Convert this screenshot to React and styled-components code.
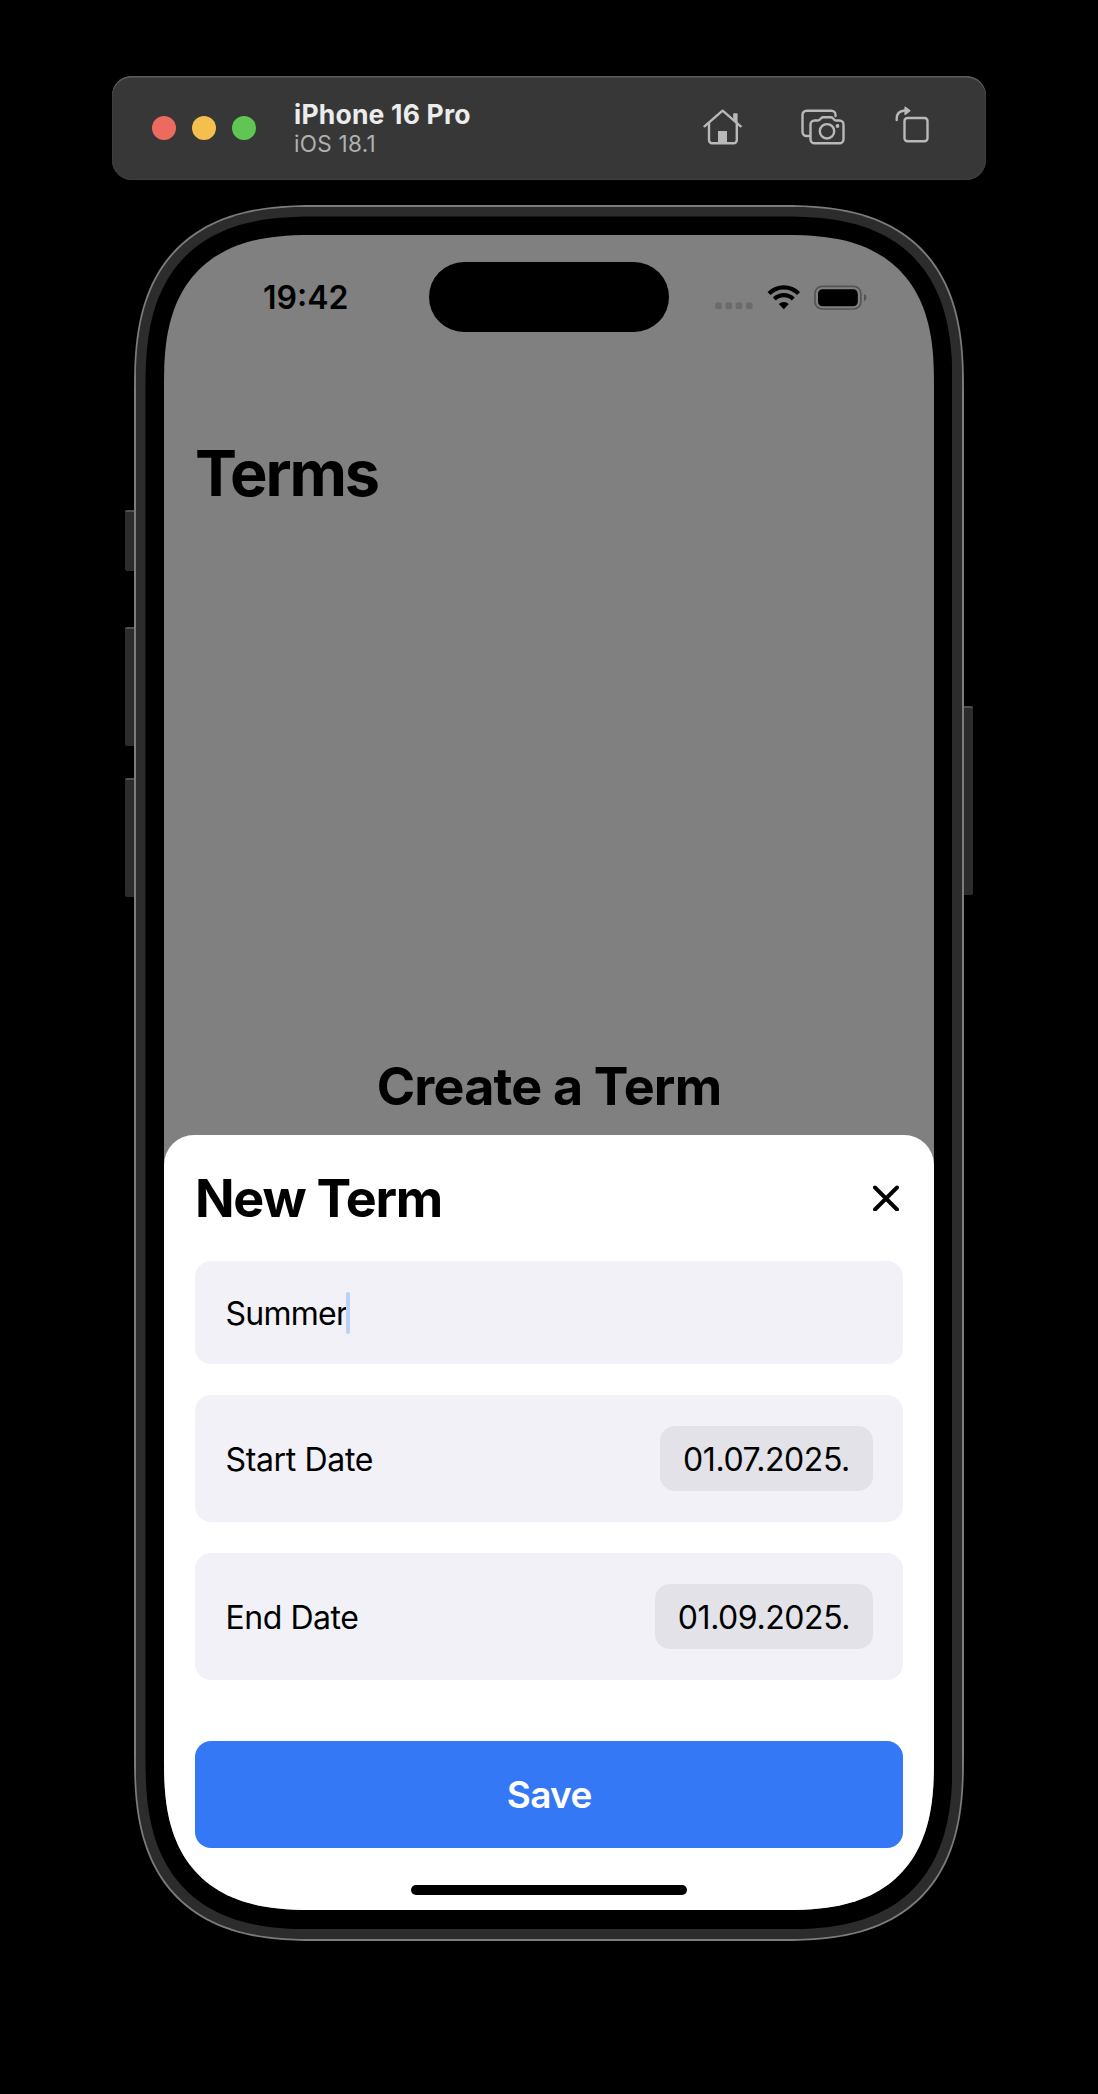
import React from "react";
import styled, { createGlobalStyle } from "styled-components";

const GlobalStyle = createGlobalStyle`
  * { box-sizing: border-box; }
  body { margin: 0; background: #000; }
`;

/* Outline of a rectangle with superellipse corners that ease into the edges. */
const smoothRect = (w, h, r) => {
  const steps = 40;
  const power = 2 / 2.68;
  const corner = Array.from({ length: steps + 1 }, (_, i) => {
    const t = (i / steps) * (Math.PI / 2);
    return [
      r * (1 - Math.abs(Math.sin(Math.PI / 2 - t)) ** power),
      r * (1 - Math.abs(Math.sin(t)) ** power),
    ];
  });
  const back = [...corner].reverse();
  const points = [
    ...back.map(([x, y]) => [w - x, y]),
    ...corner.map(([x, y]) => [w - x, h - y]),
    ...back.map(([x, y]) => [x, h - y]),
    ...corner.map(([x, y]) => [x, y]),
  ];
  return "M" + points.map(([x, y]) => `${x.toFixed(2)} ${y.toFixed(2)}`).join("L") + "Z";
};

const Page = styled.main`
  width: 1098px;
  height: 2094px;
  padding-top: 76px;
  background: #000;
  display: flex;
  flex-direction: column;
  align-items: center;
  gap: 25px;
  font-family: Inter, "Liberation Sans", sans-serif;
  color: #000;
`;

const Toolbar = styled.header`
  width: 874px;
  height: 104px;
  padding: 0 57px 0 40px;
  border-radius: 20px;
  background: #373737;
  box-shadow: inset 0 1.5px 0 #5c5c5c, inset 0 0 0 1px #3e3e3e;
  display: flex;
  align-items: center;
`;

const Lights = styled.div`
  display: flex;
  gap: 16px;
`;

const Light = styled.span`
  width: 24px;
  height: 24px;
  border-radius: 50%;
  background: ${(p) => p.$color};
`;

const Device = styled.div`
  margin-left: 38px;
  padding-bottom: 1px;
  flex: 1;
`;

const DeviceName = styled.div`
  font-size: 26.5px;
  line-height: 32px;
  font-weight: 700;
  letter-spacing: 0.2px;
  color: #ececec;
`;

const DeviceOs = styled.div`
  font-size: 22.5px;
  line-height: 28px;
  letter-spacing: 0.3px;
  color: #b0b0b0;
`;

const Tools = styled.div`
  padding-bottom: 7px;
  display: flex;
  align-items: flex-end;
`;

const Tool = styled.span`
  display: flex;
  margin-left: ${(p) => p.$gap}px;
`;

const Phone = styled.div`
  display: grid;
  grid-template-columns: 9.5px 830px 9.5px;
`;

const Keys = styled.div`
  padding-top: ${(p) => p.$top}px;
  padding-right: ${(p) => (p.$right ? 1 : 0)}px;
  display: flex;
  flex-direction: column;
`;

const Key = styled.span`
  height: ${(p) => p.$height}px;
  margin-bottom: ${(p) => p.$after || 0}px;
  background: #2c2c2c;
  border-top: 2px solid #505050;
  border-radius: ${(p) => (p.$right ? "0 2px 2px 0" : "2px 0 0 2px")};
`;

const Layer = styled.div`
  width: ${(p) => p.$w}px;
  height: ${(p) => p.$h}px;
  padding: ${(p) => p.$inset}px;
  background: ${(p) => p.$color};
  clip-path: path("${(p) => smoothRect(p.$w, p.$h, p.$r)}");
`;

const Screen = styled.div`
  width: 770px;
  height: 1675px;
  background: #808080;
  clip-path: path("${smoothRect(770, 1675, 153)}");
  display: flex;
  flex-direction: column;
`;

const StatusBar = styled.div`
  height: 124px;
  flex: none;
  padding-top: 27px;
  display: grid;
  grid-template-columns: 265px 240px 1fr;
`;

const Clock = styled.div`
  padding-left: 99px;
  font-size: 32px;
  line-height: 72px;
  font-weight: 600;
`;

const Island = styled.div`
  height: 70px;
  border-radius: 36px;
  background: #000;
`;

const Indicators = styled.div`
  height: 71px;
  padding-left: 46px;
`;

const PageTitle = styled.h1`
  margin: 74px 0 0 31px;
  font-size: 63px;
  line-height: 80px;
  font-weight: 700;
  letter-spacing: -2.1px;
`;

const EmptyTitle = styled.h2`
  margin: auto 0 16px;
  text-align: center;
  font-size: 52px;
  line-height: 64px;
  font-weight: 700;
  letter-spacing: -0.8px;
`;

const Sheet = styled.section`
  height: 775px;
  flex: none;
  padding: 31px 30.5px 0 31px;
  border-radius: 30px 30px 0 0;
  background: #fff;
  display: flex;
  flex-direction: column;
`;

const SheetHead = styled.div`
  height: 64px;
  margin-bottom: 31px;
  padding-right: 4px;
  display: flex;
  align-items: center;
  justify-content: space-between;
`;

const SheetTitle = styled.h2`
  margin: 2px 0 0;
  font-size: 52px;
  line-height: 64px;
  font-weight: 700;
  letter-spacing: -1.25px;
`;

const Field = styled.div`
  height: ${(p) => p.$height}px;
  margin-bottom: 31px;
  padding: 0 30.5px;
  border-radius: 16px;
  background: #f2f1f7;
  display: flex;
  align-items: center;
  font-size: 32px;
  line-height: 40px;
`;

const FieldText = styled.span`
  padding-top: 3px;
  flex: ${(p) => (p.$grow ? 1 : "none")};
  letter-spacing: ${(p) => p.$track}px;
`;

const Caret = styled.span`
  width: 4px;
  height: 42px;
  margin: 1px 0 0 -1px;
  border-radius: 2px;
  background: #bbd1f5;
`;

const DatePill = styled.span`
  width: ${(p) => p.$width}px;
  height: 65px;
  padding-top: 3px;
  border-radius: 15px;
  background: #e3e2e8;
  display: flex;
  align-items: center;
  justify-content: center;
  letter-spacing: -0.43px;
`;

const SaveButton = styled.button`
  height: 107px;
  margin-top: 30.5px;
  padding: 0;
  border: 0;
  border-radius: 16px;
  background: #3478f6;
  color: #fff;
  font: 600 37px/106px Inter, "Liberation Sans", sans-serif;
  letter-spacing: -0.7px;
`;

const HomeBar = styled.div`
  width: 276px;
  height: 9.5px;
  margin: 37px auto 0;
  border-radius: 5px;
  background: #000;
`;

const HomeIcon = () => (
  <svg width="40" height="36" viewBox="0 0 40 36" fill="none" stroke="#b9b9b9" strokeWidth="2.4" strokeLinecap="round" strokeLinejoin="round">
    <path d="M1.5 17.3 19.6 1.7 37.7 17.3" />
    <path d="M6 14.5V31.3a3 3 0 0 0 3 3H30.8a3 3 0 0 0 3-3V14.5" />
    <path d="M31 11V5h2.8V13.5" fill="#b9b9b9" strokeWidth="1.6" />
    <path d="M15 22h9v12h-9z" fill="#b9b9b9" stroke="none" />
  </svg>
);

const CameraIcon = () => (
  <svg width="44" height="36" viewBox="0 0 44 36" fill="none" stroke="#b9b9b9" strokeWidth="2.4" strokeLinecap="round" strokeLinejoin="round">
    <path d="M8 27H5.5a4 4 0 0 1-4-4V5.7a4 4 0 0 1 4-4H30.5a4 4 0 0 1 4 4V7" />
    <path d="M13.5 11.5h3.2c1 0 1.6-.3 2.2-1l1.2-1.3c.6-.7 1.3-1 2.2-1h7.4c.9 0 1.6.3 2.2 1l1.2 1.3c.6.7 1.2 1 2.2 1h3.2a4 4 0 0 1 4 4V30.3a4 4 0 0 1-4 4H13.5a4 4 0 0 1-4-4V15.5a4 4 0 0 1 4-4z" />
    <circle cx="26" cy="22.3" r="7.2" />
    <circle cx="36.5" cy="17" r="1.9" fill="#b9b9b9" stroke="none" />
  </svg>
);

const RotateIcon = () => (
  <svg width="34" height="40" viewBox="0 0 34 40" fill="none" stroke="#b9b9b9" strokeWidth="2.4" strokeLinecap="round" strokeLinejoin="round">
    <rect x="9.5" y="13" width="23" height="23.3" rx="3" />
    <path d="M1.7 15V13.5C1.7 8.5 4.5 6 9.5 5.5" />
    <path d="M10 2 15 5.7 10 9.5z" fill="#b9b9b9" strokeWidth="1.2" />
  </svg>
);

const StatusIcons = () => (
  <svg width="152" height="71" viewBox="0 0 152 71">
    <g fill="#6b6b6b">
      {[0, 10.3, 20.5, 30.8].map((x) => (
        <rect key={x} x={0.2 + x} y="40.6" width="6.6" height="6.6" rx="1.8" />
      ))}
    </g>
    <g fill="none" stroke="#000" strokeWidth="4.2">
      <path d="M54 31.5A20.8 20.8 0 0 1 83.6 31.5" />
      <path d="M59.3 37.1A13.5 13.5 0 0 1 78.3 37.1" />
    </g>
    <path d="M63.8 41.9A7.5 7.5 0 0 1 73.8 41.9L68.8 47.2z" />
    <rect x="100" y="24.3" width="45.800" height="22.700" rx="7" fill="none" stroke="#545454" strokeWidth="1.700" />
    <rect x="103" y="27.200" width="39.800" height="17" rx="4.500" />
    <path d="M149 32c3.200 1.200 3.200 6 0 7.200z" fill="#545454" />
  </svg>
);

const CloseIcon = () => (
  <svg width="26" height="26" viewBox="0 0 26 26" stroke="#000" strokeWidth="3.9" strokeLinecap="round">
    <path d="M2 2.5 24 24.500M24 2.500 2 24.500" />
  </svg>
);

export default function App() {
  return (
    <Page>
      <GlobalStyle />
      <Toolbar>
        <Lights>
          <Light $color="#ed6a5e" />
          <Light $color="#f5bf4f" />
          <Light $color="#61c554" />
        </Lights>
        <Device>
          <DeviceName>iPhone 16 Pro</DeviceName>
          <DeviceOs>iOS 18.1</DeviceOs>
        </Device>
        <Tools>
          <Tool $gap={0}><HomeIcon /></Tool>
          <Tool $gap={57.5}><CameraIcon /></Tool>
          <Tool $gap={50.5}><RotateIcon /></Tool>
        </Tools>
      </Toolbar>
      <Phone>
        <Keys $top={305}>
          <Key $height={61} $after={56} />
          <Key $height={119} $after={32} />
          <Key $height={119} />
        </Keys>
        <Layer $w={830} $h={1736} $r={188} $inset={1.7} $color="#7c7c7c">
          <Layer $w={826.6} $h={1732.6} $r={186.3} $inset={9.8} $color="#2c2c2c">
            <Layer $w={807} $h={1713} $r={175} $inset={18.5} $color="#000">
              <Screen>
                <StatusBar>
                  <Clock>19:42</Clock>
                  <Island />
                  <Indicators>
                    <StatusIcons />
                  </Indicators>
                </StatusBar>
                <PageTitle>Terms</PageTitle>
                <EmptyTitle>Create a Term</EmptyTitle>
                <Sheet>
                  <SheetHead>
                    <SheetTitle>New Term</SheetTitle>
                    <CloseIcon />
                  </SheetHead>
                  <Field $height={103}>
                    <FieldText $track={-0.75}>Summer</FieldText>
                    <Caret />
                  </Field>
                  <Field $height={127}>
                    <FieldText $grow $track={-0.35}>Start Date</FieldText>
                    <DatePill $width={213}>01.07.2025.</DatePill>
                  </Field>
                  <Field $height={127}>
                    <FieldText $grow $track={-0.45}>End Date</FieldText>
                    <DatePill $width={218}>01.09.2025.</DatePill>
                  </Field>
                  <SaveButton>Save</SaveButton>
                  <HomeBar />
                </Sheet>
              </Screen>
            </Layer>
          </Layer>
        </Layer>
        <Keys $top={501} $right>
          <Key $height={189} $right />
        </Keys>
      </Phone>
    </Page>
  );
}
